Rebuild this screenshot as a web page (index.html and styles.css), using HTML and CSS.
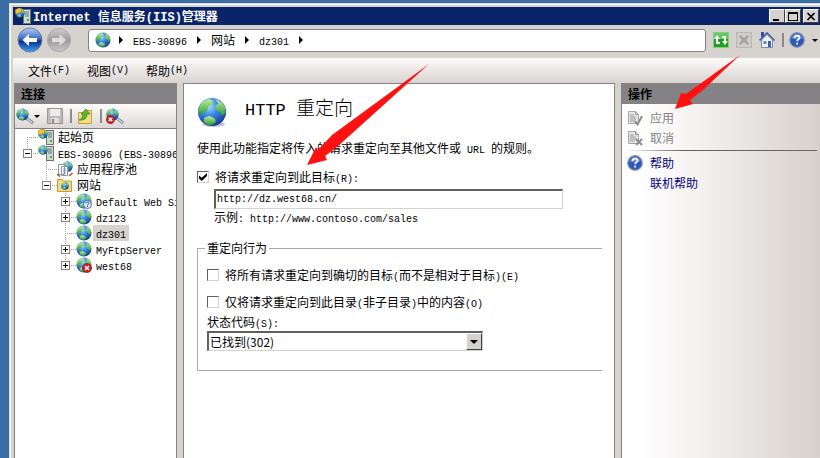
FILE: index.html
```html
<!DOCTYPE html>
<html lang="zh-CN">

  <head>
    <meta charset="utf-8">
    <title>Internet 信息服务(IIS)管理器</title>
    <link rel="stylesheet" href="styles.css">
  </head>

  <body>
    <svg class="defs" width="0" height="0" aria-hidden="true">
      <defs>
        <radialGradient id="sea" cx="40%" cy="30%" r="70%">
          <stop offset="0" stop-color="#a4dcff" />
          <stop offset="0.45" stop-color="#3a8ae8" />
          <stop offset="1" stop-color="#163f9c" />
        </radialGradient>
        <linearGradient id="land" x1="0" y1="0" x2="0" y2="1">
          <stop offset="0" stop-color="#c4ee9a" />
          <stop offset="1" stop-color="#2c9a38" />
        </linearGradient>
        <linearGradient id="ball" x1="0" y1="0" x2="0" y2="1">
          <stop offset="0" stop-color="#b4cdf2" />
          <stop offset="0.45" stop-color="#3a6cc8" />
          <stop offset="0.55" stop-color="#0a2f96" />
          <stop offset="1" stop-color="#3fa4f4" />
        </linearGradient>
        <linearGradient id="ball-off" x1="0" y1="0" x2="0" y2="1">
          <stop offset="0" stop-color="#d2d0d0" />
          <stop offset="0.5" stop-color="#9c9a9c" />
          <stop offset="1" stop-color="#c8c6c6" />
        </linearGradient>
        <symbol id="globe" viewBox="0 0 32 32">
          <circle cx="16" cy="16" r="15" fill="url(#sea)" />
          <path d="M3 9 Q7 3 13 2 L17 4 L16 8 L12 10 L11 14 L7 17 L4 19 L1 16 Z" fill="url(#land)" />
          <path d="M19 2 Q27 4 30 11 L30 17 L27 20 L24 16 L20 13 L20 9 L23 7 Z" fill="url(#land)" />
          <path d="M8 22 L13 20 L19 23 L20 27 L15 30 Q10 30 7 26 Z" fill="url(#land)" />
        </symbol>
        <symbol id="server" viewBox="0 0 16 16">
          <rect x="8.5" y="1.5" width="7" height="14" fill="#d2d8d4" stroke="#687470" />
          <path d="M10 4h4M10 6h4M10 8h4" stroke="#66736e" />
          <rect x="12" y="11" width="2" height="2" fill="#3bb53b" />
          <svg x="0" y="0" width="10" height="10" viewBox="0 0 32 32"><use href="#globe" /></svg>
        </symbol>
        <symbol id="start" viewBox="0 0 16 16">
          <use href="#server" />
          <path d="M0 2l4-2 3 1-1 3-5 2z" fill="#f4c430" stroke="#b98412" stroke-width=".6" />
        </symbol>
        <symbol id="help" viewBox="0 0 16 16">
          <circle cx="8" cy="8" r="7.3" fill="#2d57b8" stroke="#8c98b4" stroke-width="1.2" />
          <path d="M2.500 6.500a5.600 5.600 0 0 1 11 0q-5 2-11 0z" fill="#86a6e4" opacity=".6" />
          <path d="M5.600 6q.1-2.400 2.500-2.400 2.400 0 2.400 2 0 1.300-1.300 2-1 .6-1 1.700" fill="none" stroke="#fff" stroke-width="1.700" />
          <rect x="7.200" y="10.700" width="1.800" height="1.800" fill="#fff" />
        </symbol>
        <symbol id="error" viewBox="0 0 10 10">
          <circle cx="5" cy="5" r="4.600" fill="#c81e1e" stroke="#8c1010" stroke-width=".6" />
          <path d="M3 3l4 4M7 3l-4 4" stroke="#fff" stroke-width="1.500" />
        </symbol>
        <symbol id="page" viewBox="0 0 16 16">
          <path d="M1.500 1.500h7l3 3v9h-10z" fill="#e6e6e6" stroke="#a4a4a4" />
          <path d="M8.500 1.500v3h3M3 5h4M3 7h6M3 9h6M3 11h5" fill="none" stroke="#9a9a9a" />
        </symbol>
        <symbol id="plug" viewBox="0 0 18 18">
          <path d="M9 11l3 1 5 4" fill="none" stroke="#7d93a4" stroke-width="3" />
          <path d="M9 11l3 1 4 3.500" fill="none" stroke="#cfdbe4" stroke-width="1.200" />
          <svg x="0" y="1" width="13" height="13" viewBox="0 0 32 32"><use href="#globe" /></svg>
        </symbol>
      </defs>
    </svg>

    <div class="window">
      <header class="titlebar">
        <svg class="icon" viewBox="0 0 16 16"><use href="#start" /></svg>
        <h1><span class="en">Internet </span>信息服务<span class="en">(IIS)</span>管理器</h1>
        <button class="win-btn" aria-label="最小化"><svg viewBox="0 0 14 11"><path d="M3 8h6v2H3z" /></svg></button>
        <button class="win-btn" aria-label="最大化"><svg viewBox="0 0 14 11"><path d="M2 1h10v9H2zM3 3v6h8V3z" fill-rule="evenodd" /></svg></button>
        <button class="win-btn win-close" aria-label="关闭"><svg viewBox="0 0 14 11"><path d="M3.500 2l7 7M10.500 2l-7 7" stroke="#000" stroke-width="1.700" /></svg></button>
      </header>

      <nav class="navbar">
        <div class="history">
          <button aria-label="后退">
            <svg viewBox="0 0 26 26">
              <circle cx="13" cy="13" r="12" fill="url(#ball)" stroke="#727c98" />
              <path d="M5.500 13l6.500-6v4h8v4h-8v4z" fill="#fff" />
            </svg>
          </button>
          <button aria-label="前进" disabled>
            <svg viewBox="0 0 26 26">
              <circle cx="13" cy="13" r="11.500" fill="url(#ball-off)" stroke="#a8a6a6" />
              <path d="M20 13l-6.500-6v4H6v4h7.500v4z" fill="#dedcdc" />
            </svg>
          </button>
        </div>
        <div class="address">
          <svg class="icon" viewBox="0 0 32 32"><use href="#globe" /></svg>
          <i class="tri"></i>
          <a href="#"><span class="en">EBS-30896</span></a>
          <i class="tri"></i>
          <a href="#">网站</a>
          <i class="tri"></i>
          <a href="#"><span class="en">dz301</span></a>
          <i class="tri"></i>
        </div>
        <div class="nav-tools">
          <button aria-label="刷新">
            <svg class="icon" viewBox="0 0 16 16">
              <rect x=".5" y=".5" width="15" height="15" fill="#22a022" stroke="#8cc88c" />
              <rect x="1" y="1" width="14" height="6" fill="#62c962" />
              <path d="M1 7l3-4 3 4H5v3h2v2H3V7zM15 9l-3 4-3-4h2V6H9V4h4v5z" fill="#fff" />
            </svg>
          </button>
          <button aria-label="停止" disabled>
            <svg class="icon" viewBox="0 0 16 16">
              <rect x=".5" y=".5" width="15" height="15" fill="#cecbc8" stroke="#bab7b4" />
              <path d="M4 4l8 8M12 4l-8 8" stroke="#9c9a98" stroke-width="2" />
            </svg>
          </button>
          <button aria-label="主页">
            <svg class="icon" viewBox="0 0 16 16">
              <rect x="2" y="0" width="3" height="5" fill="#3b4c9c" />
              <path d="M2.500 8v7.500h11V8L8 2.500z" fill="#f2f4fa" stroke="#7c88a8" />
              <path d="M.5 8.500L8 1l7.500 7.500" fill="none" stroke="#4a62b4" stroke-width="1.700" />
              <rect x="4.500" y="9" width="3" height="3" fill="#5d86c8" />
              <rect x="9" y="9" width="3" height="6" fill="#3d62a4" />
            </svg>
          </button>
          <i class="sep"></i>
          <button aria-label="帮助"><svg class="icon" viewBox="0 0 16 16"><use href="#help" /></svg></button>
          <i class="caret"></i>
        </div>
      </nav>

      <div class="menubar">
        <button>文件<span class="en">(F)</span></button>
        <button>视图<span class="en">(V)</span></button>
        <button>帮助<span class="en">(H)</span></button>
      </div>

      <div class="panes">
        <aside class="connections">
          <h2 class="pane-title">连接</h2>
          <div class="toolbar">
            <button aria-label="连接到"><svg class="tool" viewBox="0 0 18 18"><use href="#plug" /></svg></button>
            <i class="caret"></i>
            <button aria-label="保存" disabled>
              <svg class="tool" viewBox="0 0 18 18">
                <path d="M1.500 1.500h15v15h-15z" fill="#bcbaba" stroke="#989696" />
                <rect x="4" y="2" width="10" height="7" fill="#eceaea" />
                <rect x="5" y="11" width="8" height="5" fill="#e0dede" />
                <rect x="6" y="12" width="2" height="4" fill="#8c8a8a" />
              </svg>
            </button>
            <i class="sep"></i>
            <button aria-label="上一级">
              <svg class="tool" viewBox="0 0 18 18">
                <path d="M2.500 5.500h6l1-2h6v13h-13z" fill="#f6dc86" stroke="#c9a040" />
                <path d="M3 13q4-1 4-6H5l5-5 4 5h-3q0 7-8 6z" fill="#5bb82c" stroke="#38841a" stroke-width=".7" />
              </svg>
            </button>
            <i class="sep"></i>
            <button aria-label="断开连接">
              <svg class="tool" viewBox="0 0 18 18">
                <use href="#plug" />
                <svg x="0" y="8" width="9" height="9" viewBox="0 0 10 10"><use href="#error" /></svg>
              </svg>
            </button>
          </div>

          <ul class="tree">
            <li>
              <div class="row"><span class="twist first"></span><svg class="icon" viewBox="0 0 16 16"><use href="#start" /></svg><a href="#">起始页</a></div>
            </li>
            <li>
              <div class="row"><span class="twist last"><button class="minus" aria-label="折叠"></button></span><svg class="icon" viewBox="0 0 16 16"><use href="#server" /></svg><a href="#"><span class="en">EBS-30896 (EBS-30896</span></a></div>
              <ul>
                <li>
                  <div class="row"><span class="twist"></span>
                    <svg class="icon" viewBox="0 0 16 16">
                      <svg x="5" y="0" width="11" height="11" viewBox="0 0 32 32"><use href="#globe" /></svg>
                      <path d="M1.500 3.500h6v10h-6zM4.500 5.500h6v9h-6z" fill="#fff" stroke="#8898a8" />
                      <path d="M6 8h3M6 10h3M6 12h3" stroke="#8898a8" />
                      <path d="M0 13l3 2.500M12 15l3.500-3" stroke="#c83c3c" stroke-width="1.500" />
                    </svg><a href="#">应用程序池</a></div>
                </li>
                <li>
                  <div class="row"><span class="twist last"><button class="minus" aria-label="折叠"></button></span>
                    <svg class="icon" viewBox="0 0 16 16">
                      <path d="M.5 2.500h5l1 1.500h8v10.500H.5z" fill="#f5d983" stroke="#c49c40" />
                      <svg x="4" y="5" width="8" height="8" viewBox="0 0 32 32"><use href="#globe" /></svg>
                    </svg><a href="#">网站</a></div>
                  <ul>
                    <li>
                      <div class="row"><span class="twist"><button class="plus" aria-label="展开"></button></span>
                        <svg class="icon" viewBox="0 0 16 16">
                          <use href="#globe" />
                          <circle cx="11.500" cy="11.500" r="4" fill="#e8f0fc" stroke="#3c64b4" />
                          <path d="M10 10.500q0-1.300 1.500-1.300t1.500 1.200q0 .8-1.500 1.400v.7M11.500 13v1" fill="none" stroke="#2848a0" />
                        </svg><a href="#"><span class="en">Default Web Site</span></a></div>
                    </li>
                    <li>
                      <div class="row"><span class="twist"><button class="plus" aria-label="展开"></button></span><svg class="icon" viewBox="0 0 32 32"><use href="#globe" /></svg><a href="#"><span class="en">dz123</span></a></div>
                    </li>
                    <li>
                      <div class="row"><span class="twist"></span><svg class="icon" viewBox="0 0 32 32"><use href="#globe" /></svg><a href="#" class="selected"><span class="en">dz301</span></a></div>
                    </li>
                    <li>
                      <div class="row"><span class="twist"><button class="plus" aria-label="展开"></button></span><svg class="icon" viewBox="0 0 32 32"><use href="#globe" /></svg><a href="#"><span class="en">MyFtpServer</span></a></div>
                    </li>
                    <li>
                      <div class="row"><span class="twist last"><button class="plus" aria-label="展开"></button></span>
                        <svg class="icon" viewBox="0 0 16 16">
                          <use href="#globe" />
                          <svg x="6" y="6" width="10" height="10" viewBox="0 0 10 10"><use href="#error" /></svg>
                        </svg><a href="#"><span class="en">west68</span></a></div>
                    </li>
                  </ul>
                </li>
              </ul>
            </li>
          </ul>
        </aside>

        <main class="feature">
          <div class="feature-head">
            <svg viewBox="0 0 32 32">
              <ellipse cx="18" cy="29" rx="12" ry="3" fill="#c4c4c4" />
              <use href="#globe" />
            </svg>
            <h2><span class="en">HTTP </span>重定向</h2>
          </div>
          <p class="intro">使用此功能指定将传入的请求重定向至其他文件或<span class="en"> URL </span>的规则。</p>

          <form>
            <label class="check"><input type="checkbox" checked><span>将请求重定向到此目标<span class="en">(R):</span></span></label>
            <div class="target">
              <input type="text" value="http://dz.west68.cn/" aria-label="重定向目标">
              <p>示例<span class="en">: http://www.contoso.com/sales</span></p>
            </div>

            <fieldset>
              <legend>重定向行为</legend>
              <label class="check"><input type="checkbox"><span>将所有请求重定向到确切的目标<span class="en">(</span>而不是相对于目标<span class="en">)(E)</span></span></label>
              <label class="check"><input type="checkbox"><span>仅将请求重定向到此目录<span class="en">(</span>非子目录<span class="en">)</span>中的内容<span class="en">(O)</span></span></label>
              <label class="status-label" for="status">状态代码<span class="en">(S):</span></label>
              <div class="select-box">
                <select id="status">
                  <option>已找到(302)</option>
                </select>
                <span class="drop"><i class="caret"></i></span>
              </div>
            </fieldset>
          </form>

          <svg class="arrow arrow-target" viewBox="0 0 122 102">
            <path d="M122 0L25 71L11 86L9 83L0 101L20 96L18 92L30 83Z" fill="#f11" />
          </svg>
        </main>

        <aside class="actions">
          <h2 class="pane-title">操作</h2>
          <ul>
            <li>
              <button disabled>
                <svg class="icon" viewBox="0 0 16 16"><use href="#page" /><path d="M8 11l2.500 3.500L15 6" fill="none" stroke="#8c8c8c" stroke-width="2" /></svg>应用
              </button>
            </li>
            <li>
              <button disabled>
                <svg class="icon" viewBox="0 0 16 16"><use href="#page" /><path d="M9 9l6 6M15 9l-6 6" stroke="#8c8c8c" stroke-width="2" /></svg>取消
              </button>
            </li>
          </ul>
          <hr>
          <ul>
            <li><a href="#"><svg class="icon" viewBox="0 0 16 16"><use href="#help" /></svg>帮助</a></li>
            <li><a href="#" class="no-icon">联机帮助</a></li>
          </ul>

          <svg class="arrow arrow-apply" viewBox="0 0 65 54">
            <path d="M65 0L11 39L6 38L0 54L18 49L15 45L28 35Z" fill="#f11" />
          </svg>
        </aside>
      </div>
    </div>
  </body>

</html>
```
FILE: styles.css
```css
* {
  box-sizing: border-box;
}

body {
  margin: 0;
  min-height: 100vh;
  display: flex;
  padding: 3px 0 0 9px;
  background: #3a6ea5;
  color: #000;
  font-family: "Noto Sans CJK SC", sans-serif;
  font-size: 12px;
  line-height: 16px;
}

h1,
h2,
p,
ul {
  margin: 0;
  padding: 0;
}

ul {
  list-style: none;
}

a {
  color: inherit;
  text-decoration: none;
}

button {
  display: flex;
  align-items: center;
  margin: 0;
  padding: 0;
  border: 0;
  background: none;
  color: inherit;
  font: inherit;
}

svg {
  display: block;
  flex: none;
}

.defs {
  position: absolute;
}

/* latin text runs at half the width of a chinese character */
.en {
  font-family: "Liberation Mono", monospace;
  font-size: 10px;
  line-height: 1;
  white-space: pre;
}

.icon {
  width: 16px;
  height: 16px;
}

.tool {
  width: 18px;
  height: 18px;
}

.sep {
  width: 2px;
  height: 14px;
  background: #8c8a8a;
}

.caret {
  border: 3px solid transparent;
  border-top-color: #000;
  border-bottom: 0;
}

.tri {
  border: 4px solid transparent;
  border-left-color: #000;
  border-right: 0;
}

.window {
  flex: 1;
  min-width: 0;
  display: flex;
  flex-direction: column;
  border-top: 1px solid #d4dce8;
  border-left: 1px solid #d4dce8;
  padding: 3px 0 0 3px;
  background: #d6d3ce;
  box-shadow: inset 1px 1px #fff;
}

/* title bar */
.titlebar {
  height: 18px;
  display: flex;
  align-items: center;
  padding: 0 1px 0 2px;
  background: #0a246a;
}

.titlebar h1 {
  flex: 1;
  margin-left: 2px;
  color: #fff;
  font-size: 12px;
  line-height: 16px;
}

.titlebar .en {
  font-size: 12px;
}

.win-btn {
  width: 16px;
  height: 14px;
  background: #d6d3ce;
  border: 1px solid;
  border-color: #fff #404040 #404040 #fff;
}

.win-btn svg {
  width: 14px;
  height: 11px;
}

.win-close {
  margin-left: 2px;
}

/* back / forward, address and icons */
.navbar {
  height: 33px;
  display: flex;
  align-items: center;
  padding: 0 4px 3px;
}

.history {
  display: flex;
  gap: 3px;
}

.history svg {
  width: 26px;
  height: 26px;
}

.address {
  flex: 1;
  height: 23px;
  display: flex;
  align-items: center;
  gap: 10px;
  margin-left: 16px;
  padding: 0 6px;
  border: 1px solid #848284;
  border-radius: 3px;
  background: #fff;
}

.address .icon {
  margin-right: -2px;
}

.nav-tools {
  display: flex;
  align-items: center;
  gap: 7px;
  margin-left: 7px;
}

.nav-tools .sep,
.nav-tools .caret {
  margin-right: -2px;
}

.menubar {
  height: 25px;
  display: flex;
  align-items: center;
  gap: 17px;
  padding: 0 15px;
  background: linear-gradient(#fdfbfb, #d8d3d0);
}

/* three columns */
.panes {
  flex: 1;
  display: flex;
  gap: 6px;
  padding-left: 1px;
}

.pane-title {
  height: 21px;
  padding-left: 6px;
  background: #848284;
  font-size: 12px;
  line-height: 22px;
}

.connections {
  width: 163px;
  border: 1px solid #848284;
  border-width: 0 1px;
  background: #fff;
  overflow: hidden;
}

.toolbar {
  height: 25px;
  display: flex;
  align-items: center;
  gap: 4px;
  padding-left: 1px;
  background: linear-gradient(#fdfbfb, #dcd7d4);
  border-bottom: 1px solid #848284;
}

.toolbar .caret {
  margin: 0 2px 0 -4px;
}

.toolbar .sep {
  margin-left: 2px;
}

.tree {
  padding-left: 4px;
}

.tree ul {
  padding-left: 19px;
}

.row {
  height: 16px;
  display: flex;
  align-items: center;
  white-space: nowrap;
}

.row a {
  margin-left: 1px;
  padding: 0 3px;
}

.row .selected {
  background: #d6d3ce;
}

.twist {
  flex: none;
  width: 19px;
  height: 16px;
  padding: 4px;
  background:
    repeating-linear-gradient(#a0a0a0 0 1px, transparent 1px 2px) 8px 0 / 1px 16px no-repeat,
    repeating-linear-gradient(90deg, #a0a0a0 0 1px, transparent 1px 2px) 8px 8px / 11px 1px no-repeat;
}

.twist.first {
  background-position: 8px 8px;
}

.twist.last {
  background-size: 1px 8px, 11px 1px;
}

.plus,
.minus {
  width: 9px;
  height: 9px;
  border: 1px solid #848284;
  background: linear-gradient(#000, #000) center / 5px 1px no-repeat #fff;
}

.plus {
  background:
    linear-gradient(#000, #000) center / 5px 1px no-repeat,
    linear-gradient(#000, #000) center / 1px 5px no-repeat,
    #fff;
}

/* redirect settings */
.feature {
  position: relative;
  flex: 1;
  min-width: 0;
  padding: 12px 12px 0 13px;
  border: 1px solid #848284;
  border-bottom: 0;
  background: #fff;
}

.feature-head {
  display: flex;
  align-items: center;
  gap: 18px;
}

.feature-head svg {
  width: 30px;
  height: 30px;
}

.feature-head h2 {
  padding-bottom: 8px;
  font-size: 19px;
  font-weight: 300;
  line-height: 22px;
}

.feature-head .en {
  font-size: 17px;
}

.intro {
  margin: 13px 0;
}

.check {
  display: flex;
  align-items: center;
  gap: 6px;
}

.check input {
  appearance: none;
  flex: none;
  width: 12px;
  height: 12px;
  margin: 0;
  border: 1px solid;
  border-color: #606060 #d6d3ce #d6d3ce #606060;
  background: #fff;
}

.check input:checked::before {
  content: "";
  display: block;
  width: 8px;
  height: 8px;
  margin: 1px;
  background: #000;
  clip-path: polygon(0 30%, 35% 60%, 100% 0, 100% 38%, 35% 100%, 0 68%);
}

.target {
  margin: 4px 0 0 17px;
}

.target input {
  display: block;
  width: 100%;
  max-width: 349px;
  height: 20px;
  padding: 0 1px;
  border: 1px solid;
  border-width: 2px 1px 1px 2px;
  border-color: #606060 #d6d3ce #d6d3ce #606060;
  font-family: "Liberation Mono", monospace;
  font-size: 10px;
}

fieldset {
  min-width: 0;
  margin: 15px 0 0;
  padding: 11px 9px 19px;
  border: 1px solid #a8a8a8;
  border-right: 0;
}

legend {
  margin-left: -2px;
  padding: 0 2px;
}

fieldset .check {
  margin-bottom: 11px;
}

fieldset .check + .status-label {
  margin-top: -7px;
}

.status-label {
  display: block;
}

.select-box {
  position: relative;
  max-width: 276px;
  margin-top: 1px;
}

.select-box select {
  appearance: none;
  display: block;
  width: 100%;
  height: 20px;
  padding: 0 18px 0 1px;
  border: 1px solid;
  border-width: 2px 1px 1px 2px;
  border-color: #606060 #d6d3ce #d6d3ce #606060;
  border-radius: 0;
  background: #fff;
  color: #000;
  font: inherit;
  line-height: 16px;
}

.drop {
  position: absolute;
  top: 2px;
  right: 1px;
  width: 16px;
  height: 17px;
  display: flex;
  align-items: center;
  justify-content: center;
  border: 1px solid;
  border-color: #fff #404040 #404040 #fff;
  background: #d6d3ce;
  pointer-events: none;
}

.drop .caret {
  border-width: 4px 4px 0;
}

/* actions */
.actions {
  position: relative;
  width: 199px;
  border-left: 1px solid #848284;
  background: linear-gradient(90deg, #fff 10%, #f2eeed 45%, #d6d1cb);
}

.actions ul {
  padding: 4px 5px 0;
}

.actions li {
  height: 20px;
  display: flex;
  align-items: center;
}

.actions li button,
.actions li a {
  display: flex;
  align-items: center;
  gap: 7px;
}

.actions li button:disabled {
  color: #848284;
}

.actions li a {
  color: #000080;
}

.actions li .no-icon {
  padding-left: 23px;
}

.actions hr {
  height: 1px;
  margin: 2px 3px -2px;
  border: 0;
  background: linear-gradient(90deg, transparent, #6c6466 30%);
}

.arrow {
  position: absolute;
  pointer-events: none;
}

.arrow-target {
  top: -20px;
  left: 123px;
  width: 122px;
  height: 102px;
}

.arrow-apply {
  top: -28px;
  left: 53px;
  width: 65px;
  height: 54px;
}
```
